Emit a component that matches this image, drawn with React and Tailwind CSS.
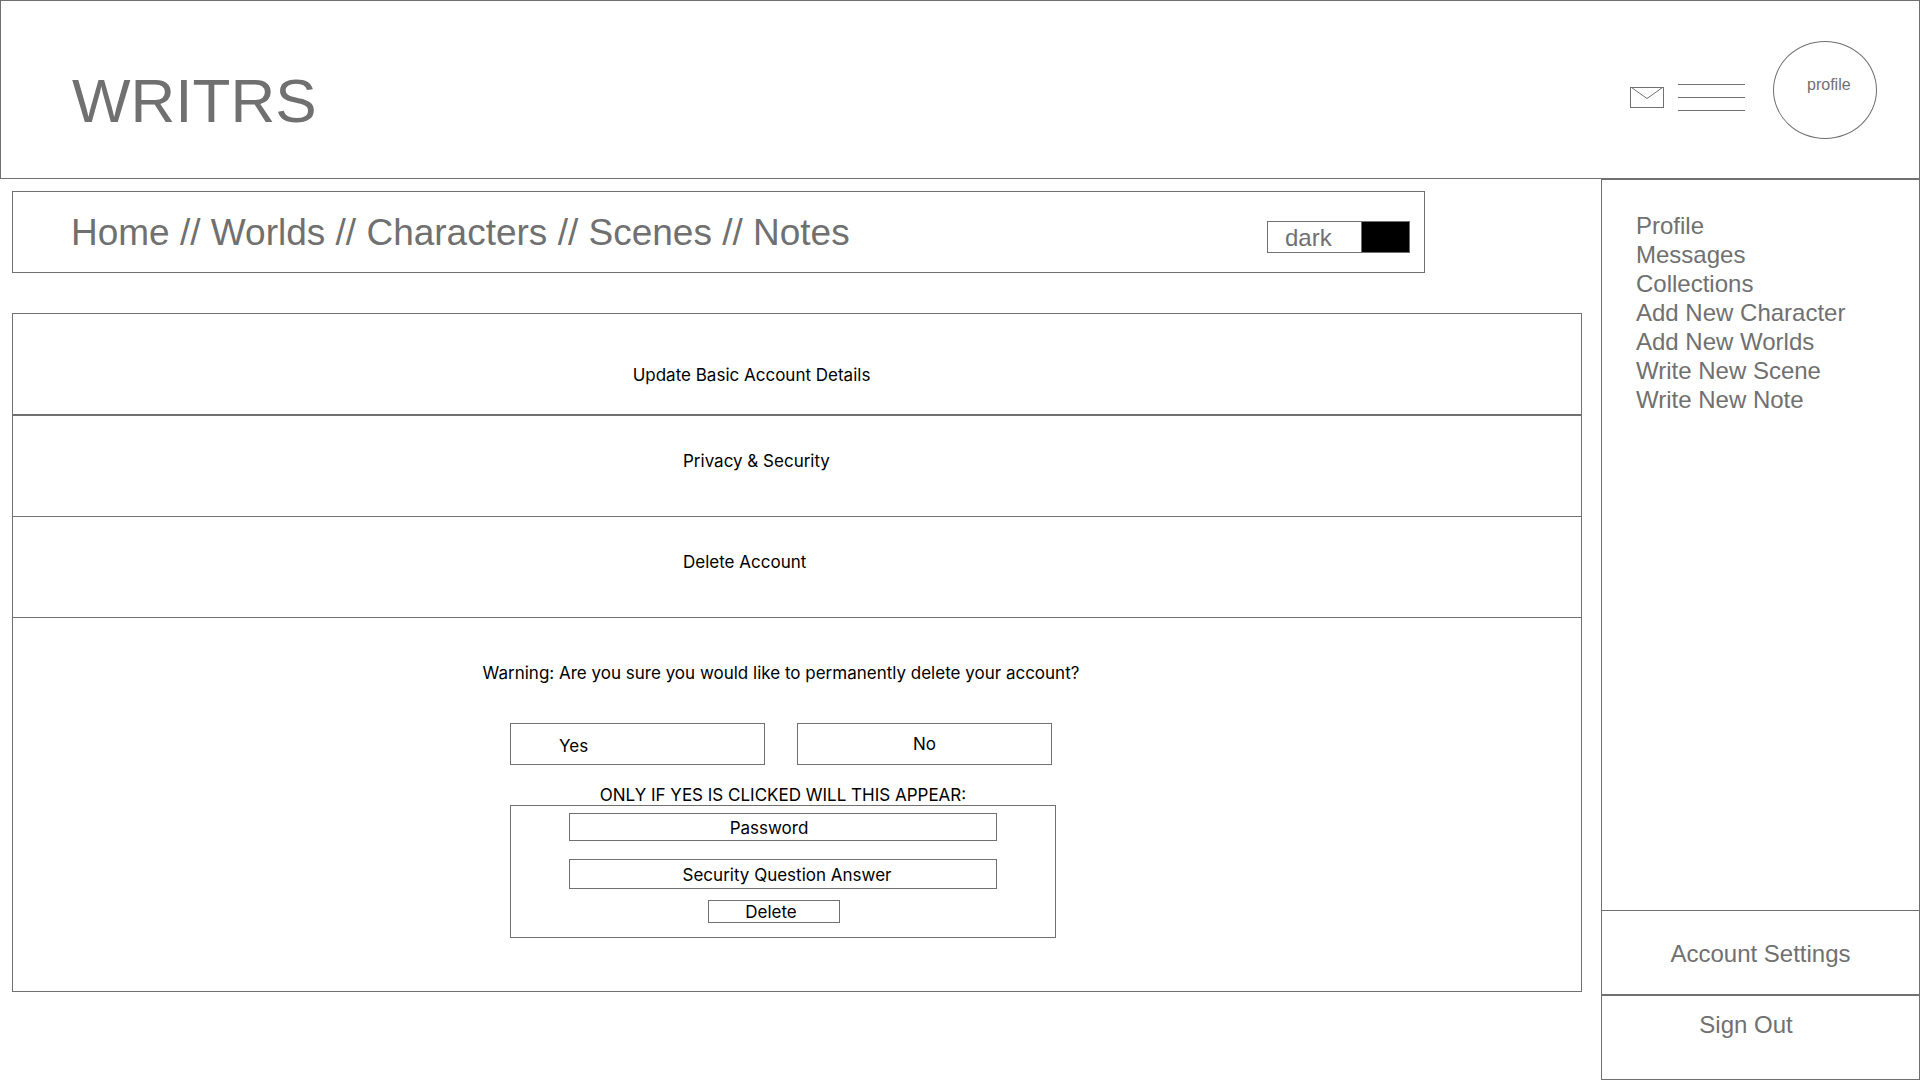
import { useState } from "react";

const navLinks = ["Home", "Worlds", "Characters", "Scenes", "Notes"];

const menuLinks = [
  "Profile",
  "Messages",
  "Collections",
  "Add New Character",
  "Add New Worlds",
  "Write New Scene",
  "Write New Note",
];

function Header() {
  return (
    <header className="flex h-[179px] items-start justify-between border border-[#707070] pr-[42px] pl-[71px]">
      <h1 className="pt-16 text-[62px] leading-[72px]">WRITRS</h1>
      <div className="flex items-start">
        <button type="button" aria-label="Messages" className="mt-[86px] mr-[14px]">
          <svg width="34" height="21" viewBox="0 0 34 21" fill="none" stroke="#707070" className="block">
            <rect x="0.5" y="0.5" width="33" height="20" />
            <path d="M1.5 0.5 L17 11.5 L32.5 0.5" />
          </svg>
        </button>
        <button type="button" aria-label="Menu" className="mt-[83px] mr-7 flex w-[67px] flex-col gap-3">
          <span className="h-px w-full bg-[#707070]" />
          <span className="h-px w-full bg-[#707070]" />
          <span className="h-px w-full bg-[#707070]" />
        </button>
        <a
          href="#profile"
          className="mt-10 flex h-[98px] w-[104px] items-start rounded-[50%] border border-[#707070] pt-[33px] pl-[33px] text-[16px] leading-5"
        >
          profile
        </a>
      </div>
    </header>
  );
}

function NavBar() {
  const [dark, setDark] = useState(true);
  return (
    <nav className="mr-[157px] flex h-[82px] items-center justify-between border border-[#707070] pr-[14px] pl-[58px]">
      <div className="pt-[2px] text-[37px] leading-[44px] whitespace-pre">
        {navLinks.map((label, i) => (
          <span key={label}>
            {i > 0 && " // "}
            <a href={"#" + label.toLowerCase()}>{label}</a>
          </span>
        ))}
      </div>
      <button
        type="button"
        role="switch"
        aria-checked={dark}
        onClick={() => setDark(!dark)}
        className="mt-[9px] flex h-8 w-[143px] border border-[#707070] text-left text-[24px] leading-8"
      >
        <span className="flex-1 pl-[17px]">dark</span>
        <span className="h-full w-12 border-l border-[#707070] bg-black" />
      </button>
    </nav>
  );
}

function DeleteForm() {
  return (
    <div className="flex flex-col items-center pt-[43px] pr-7 pb-[53px] text-center">
      <p className="mr-1 leading-6">Warning: Are you sure you would like to permanently delete your account?</p>
      <div className="mt-[38px] mr-1 flex gap-8">
        <button type="button" className="h-[42px] w-[255px] border border-[#707070] pt-[6px] pl-12 text-left">
          Yes
        </button>
        <button type="button" className="h-[42px] w-[255px] border border-[#707070] pt-[2px]">
          No
        </button>
      </div>
      <p className="mt-[18px] leading-6">ONLY IF YES IS CLICKED WILL THIS APPEAR:</p>
      <form
        onSubmit={(e) => e.preventDefault()}
        className="-mt-[2px] flex w-[546px] flex-col items-center border border-[#707070] pt-[7px] pb-[14px]"
      >
        <input
          type="password"
          aria-label="Password"
          placeholder="Password"
          className="h-[28px] w-[428px] border border-[#707070] pt-px pr-7 text-center placeholder:text-black placeholder:opacity-100"
        />
        <input
          type="text"
          aria-label="Security Question Answer"
          placeholder="Security Question Answer"
          className="mt-[18px] h-[30px] w-[428px] border border-[#707070] pt-px pl-2 text-center placeholder:text-black placeholder:opacity-100"
        />
        <button type="submit" className="mt-[11px] mr-[18px] h-[23px] w-[132px] border border-[#707070] pr-[6px] leading-5">
          Delete
        </button>
      </form>
    </div>
  );
}

function Settings() {
  return (
    <section className="mt-10 border border-[#707070] font-['Inter',sans-serif] text-[17px] text-black">
      <button type="button" className="block h-[102px] w-full border-b-2 border-[#707070] pt-6 pr-[91px] text-center">
        Update Basic Account Details
      </button>
      <button type="button" className="block h-[101px] w-full border-b border-[#707070] pb-2 pl-[670px] text-left">
        Privacy &amp; Security
      </button>
      <button type="button" className="block h-[101px] w-full border-b border-[#707070] pb-2 pl-[670px] text-left">
        Delete Account
      </button>
      <DeleteForm />
    </section>
  );
}

function Sidebar() {
  return (
    <aside className="flex w-[319px] shrink-0 flex-col border border-[#707070] text-[24px] leading-[29px]">
      <ul className="flex-1 pt-[31px] pl-[34px]">
        {menuLinks.map((label) => (
          <li key={label}>
            <a href={"#" + label.toLowerCase().replaceAll(" ", "-")}>{label}</a>
          </li>
        ))}
      </ul>
      <a href="#account-settings" className="block h-[86px] border-y border-b-2 border-[#707070] pt-7 text-center">
        Account Settings
      </a>
      <a href="#sign-out" className="block h-[83px] pt-[14px] pr-[29px] text-center">
        Sign Out
      </a>
    </aside>
  );
}

export default function App() {
  return (
    <div className="flex min-h-screen flex-col bg-white font-['Liberation_Sans',Arial,sans-serif] text-[#707070]">
      <Header />
      <div className="flex flex-1">
        <main className="flex-1 pt-3 pr-[19px] pl-3">
          <NavBar />
          <Settings />
        </main>
        <Sidebar />
      </div>
    </div>
  );
}
